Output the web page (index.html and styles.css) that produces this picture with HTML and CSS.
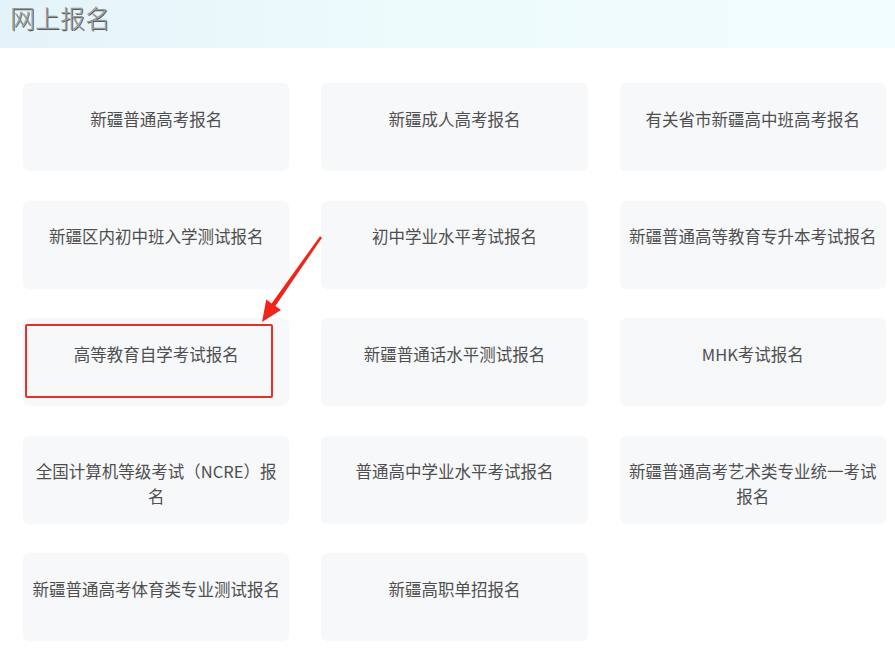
FILE: index.html
```html
<!DOCTYPE html>
<html lang="zh-CN">
<head>
<meta charset="utf-8">
<title>网上报名</title>
<link rel="stylesheet" href="styles.css">
</head>
<body>
<header class="banner"><h1 class="banner-title">网上报名</h1></header>
<main class="grid">
  <a class="card">新疆普通高考报名</a>
  <a class="card">新疆成人高考报名</a>
  <a class="card">有关省市新疆高中班高考报名</a>
  <a class="card">新疆区内初中班入学测试报名</a>
  <a class="card">初中学业水平考试报名</a>
  <a class="card">新疆普通高等教育专升本考试报名</a>
  <a class="card card-marked">高等教育自学考试报名<span class="mark-box"></span></a>
  <a class="card">新疆普通话水平测试报名</a>
  <a class="card">MHK考试报名</a>
  <a class="card">全国计算机等级考试（NCRE）报名</a>
  <a class="card">普通高中学业水平考试报名</a>
  <a class="card">新疆普通高考艺术类专业统一考试报名</a>
  <a class="card">新疆普通高考体育类专业测试报名</a>
  <a class="card">新疆高职单招报名</a>
</main>
<svg class="arrow" width="895" height="649" viewBox="0 0 895 649" aria-hidden="true">
  <polygon fill="#f2231b" points="262,322 266.3,299.6 271.6,303.4 320.0,236.2 322.0,237.8 275.4,306.1 281,309.9"/>
</svg>
</body>
</html>
```

FILE: styles.css
```css
html, body {
  margin: 0;
  padding: 0;
  background: #ffffff;
}
body {
  position: relative;
  width: 895px;
  min-height: 649px;
  font-family: "Noto Sans CJK SC", "Noto Sans", sans-serif;
  overflow: hidden;
}
.banner {
  height: 48px;
  background: linear-gradient(90deg, #e4f3f9 0%, #eefbfd 45%, #f1fdfe 100%);
  padding-left: 10px;
  box-sizing: border-box;
}
.banner-title {
  margin: 0;
  font-weight: 300;
  font-size: 25px;
  line-height: 35px;
  color: #9a9a9a;
  text-shadow: 1px 1px 0 rgba(40, 40, 40, 0.75);
}
.grid {
  display: grid;
  grid-template-columns: repeat(3, 1fr);
  column-gap: 32px;
  row-gap: 29.5px;
  padding: 35px 9px 0 23px;
}
.card {
  position: relative;
  display: block;
  height: 88px;
  box-sizing: border-box;
  padding: 23.5px 8px 0;
  background: #f7f8fa;
  border-radius: 6px;
  text-align: center;
  font-size: 16.5px;
  line-height: 25px;
  color: #4f4f4f;
  text-decoration: none;
}
.mark-box {
  position: absolute;
  left: 2px;
  top: 6px;
  width: 248px;
  height: 74px;
  box-sizing: border-box;
  border: 2px solid #e8302a;
  border-radius: 2px;
}
.arrow {
  position: absolute;
  left: 0;
  top: 0;
  pointer-events: none;
}
```
